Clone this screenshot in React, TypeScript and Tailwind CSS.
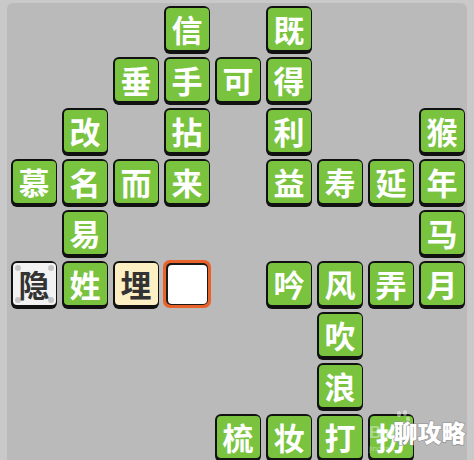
import React from "react";

type Kind = "g" | "w" | "y" | "e";
type Cell = { c: string; col: number; row: number; k?: Kind };

const colCls = ["", "col-start-1", "col-start-2", "col-start-3", "col-start-4", "col-start-5", "col-start-6", "col-start-7", "col-start-8", "col-start-9"];
const rowCls = ["", "row-start-1", "row-start-2", "row-start-3", "row-start-4", "row-start-5", "row-start-6", "row-start-7", "row-start-8", "row-start-9"];

const cells: Cell[] = [
  { c: "信", col: 4, row: 1 },
  { c: "既", col: 6, row: 1 },
  { c: "垂", col: 3, row: 2 },
  { c: "手", col: 4, row: 2 },
  { c: "可", col: 5, row: 2 },
  { c: "得", col: 6, row: 2 },
  { c: "改", col: 2, row: 3 },
  { c: "拈", col: 4, row: 3 },
  { c: "利", col: 6, row: 3 },
  { c: "猴", col: 9, row: 3 },
  { c: "慕", col: 1, row: 4 },
  { c: "名", col: 2, row: 4 },
  { c: "而", col: 3, row: 4 },
  { c: "来", col: 4, row: 4 },
  { c: "益", col: 6, row: 4 },
  { c: "寿", col: 7, row: 4 },
  { c: "延", col: 8, row: 4 },
  { c: "年", col: 9, row: 4 },
  { c: "易", col: 2, row: 5 },
  { c: "马", col: 9, row: 5 },
  { c: "隐", col: 1, row: 6, k: "w" },
  { c: "姓", col: 2, row: 6 },
  { c: "埋", col: 3, row: 6, k: "y" },
  { c: "", col: 4, row: 6, k: "e" },
  { c: "吟", col: 6, row: 6 },
  { c: "风", col: 7, row: 6 },
  { c: "弄", col: 8, row: 6 },
  { c: "月", col: 9, row: 6 },
  { c: "吹", col: 7, row: 7 },
  { c: "浪", col: 7, row: 8 },
  { c: "梳", col: 5, row: 9 },
  { c: "妆", col: 6, row: 9 },
  { c: "打", col: 7, row: 9 },
  { c: "扮", col: 8, row: 9 },
];

const font = { fontFamily: '"Noto Sans CJK SC", "Noto Sans", sans-serif' };

function Screw() {
  return <span className="w-[6px] h-[6px] rounded-full bg-[#c6c6c6]" />;
}

function Tile({ cell }: { cell: Cell }) {
  const k = cell.k ?? "g";
  const pos = `${colCls[cell.col]} ${rowCls[cell.row]}`;
  if (k === "e") {
    return (
      <div className={`${pos} w-[48px] h-[48px] -ml-[1px] -mt-[1px] rounded-[7px] bg-[#e8622a] p-[3px]`}>
        <div className="w-full h-full rounded-[5px] bg-[#1a1a1a] p-[1.5px]">
          <div className="w-full h-full rounded-[4px] bg-white" />
        </div>
      </div>
    );
  }
  const face =
    k === "g"
      ? "bg-[#79c33f] text-white"
      : k === "w"
      ? "bg-[#f2f2f2] text-[#333333]"
      : "bg-[#fcefc4] text-[#333333]";
  return (
    <div className={`${pos} w-[46px] h-[48px] rounded-[6px] bg-[#111111] pt-[1.5px] px-[1.5px] pb-[4px]`}>
      <div
        className={`relative w-full h-full rounded-[4px] ${face} flex items-center justify-center text-[31px] leading-none font-bold`}
        style={font}
      >
        {k === "w" && (
          <div className="absolute inset-[2px] flex flex-col justify-between">
            <div className="flex justify-between">
              <Screw />
              <Screw />
            </div>
            <div className="flex justify-between">
              <Screw />
              <Screw />
            </div>
          </div>
        )}
        <span className="relative -mt-[1px]">{cell.c}</span>
      </div>
    </div>
  );
}

function Watermark() {
  return (
    <div className="absolute left-[369px] top-[410px] flex items-end pointer-events-none">
      <div className="flex flex-col items-start" style={{ fontFamily: '"Liberation Sans", sans-serif' }}>
        <div className="flex items-start">
          <span className="mt-[14px] text-[17px] leading-none font-bold text-white/40">Bai</span>
          <svg width="16" height="20" viewBox="0 0 16 20">
            <ellipse cx="4" cy="4" rx="2" ry="3" fill="rgba(255,255,255,0.45)" />
            <ellipse cx="10" cy="3" rx="2" ry="3" fill="rgba(255,255,255,0.45)" />
            <ellipse cx="13" cy="9" rx="2" ry="2.5" fill="rgba(255,255,255,0.45)" />
            <path d="M3 15 C4 10 11 10 12 15 C12 19 3 19 3 15Z" fill="rgba(255,255,255,0.35)" />
          </svg>
        </div>
        <span className="mt-[4px] text-[8px] leading-none text-white/40">jingyan</span>
      </div>
      <span
        className="-ml-[18px] mb-[9px] text-[24px] leading-none font-black text-white"
        style={{
          fontFamily: '"Noto Sans CJK SC", sans-serif',
          WebkitTextStroke: "1.2px #8f8f8f",
          paintOrder: "stroke fill",
        }}
      >
        聊攻略
      </span>
    </div>
  );
}

export default function App() {
  return (
    <div className="relative w-[474px] h-[460px] overflow-hidden bg-[#c9c9c9] pt-[3px] pl-[7px]">
      <div className="w-[460px] h-[470px] bg-[#bababa] rounded-t-[6px] pl-[4px] pt-[3px]">
        <div className="grid grid-cols-[repeat(9,46px)] grid-rows-[repeat(9,48px)] gap-x-[5px] gap-y-[3px]">
          {cells.map((cell, i) => (
            <Tile key={i} cell={cell} />
          ))}
        </div>
      </div>
      <Watermark />
    </div>
  );
}
